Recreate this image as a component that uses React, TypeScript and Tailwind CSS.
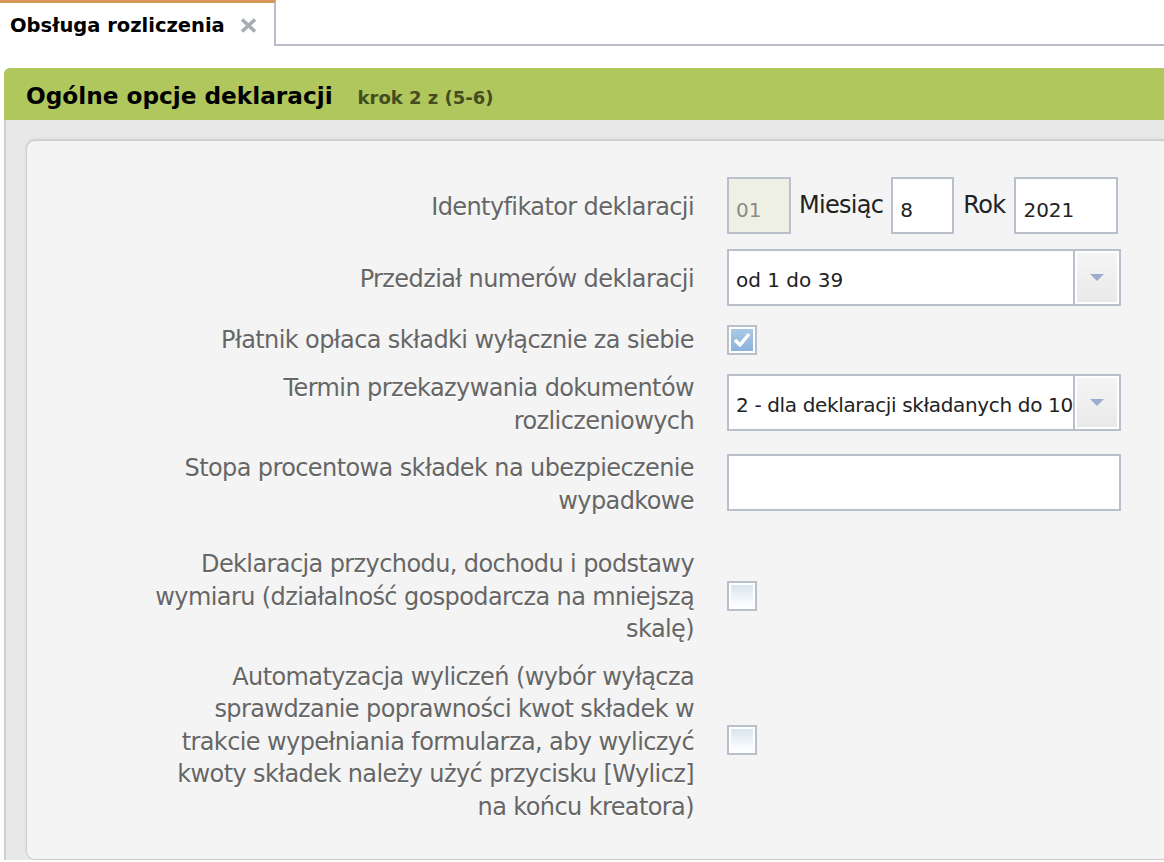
import React from "react";

const font = "font-['DejaVu_Sans',sans-serif]";

function Label({ lines }: { lines: string[] }) {
  return (
    <div className="-mb-[2px] w-[667px] shrink-0 pt-[2px] text-right text-[24px] leading-[32.5px] tracking-[-0.6px] text-[#666] [text-shadow:0_1px_0_#fff]">
      {lines.map((l, i) => (
        <div key={i}>{l}</div>
      ))}
    </div>
  );
}

function TextBox({
  value,
  className,
  muted,
}: {
  value: string;
  className: string;
  muted?: boolean;
}) {
  return (
    <div
      className={`flex h-[57px] items-center border-2 border-[#b9c0cc] pl-[7px] pt-[8px] text-[20px] ${
        muted ? "bg-[#eff0e4] text-[#8a8a8a]" : "bg-white text-[#222]"
      } ${className}`}
    >
      {value}
    </div>
  );
}

function Select({ value, tight }: { value: string; tight?: boolean }) {
  return (
    <div className="flex h-[57px] w-[394px] border-2 border-[#b9c0cc] bg-white">
      <div
        className={`flex flex-1 items-center overflow-hidden whitespace-nowrap pl-[7px] pt-[4px] text-[20px] text-[#222] ${
          tight ? "tracking-[-0.35px]" : ""
        }`}
      >
        {value}
      </div>
      <div className="flex w-[46px] shrink-0 items-center justify-center border-l-2 border-[#b9c0cc] bg-white p-[2px]">
        <div className="flex h-full w-full items-center justify-center bg-gradient-to-b from-[#f5f5f5] to-[#e9e9ea]">
          <svg width="14" height="8" viewBox="0 0 14 8">
            <path d="M0 0 L14 0 L7 7 Z" fill="#9dabcf" />
          </svg>
        </div>
      </div>
    </div>
  );
}

function Checkbox({ checked }: { checked?: boolean }) {
  return (
    <div className="h-[30px] w-[30px] border-2 border-[#b9c0cc] bg-white p-[2px]">
      {checked ? (
        <div className="flex h-full w-full items-center justify-center bg-gradient-to-b from-[#a9c8e5] to-[#8ab3da]">
          <svg width="18" height="16" viewBox="0 0 18 16">
            <path
              d="M2 8 L7 13 L16 2"
              fill="none"
              stroke="#fff"
              strokeWidth="3.5"
              strokeLinejoin="round"
            />
          </svg>
        </div>
      ) : (
        <div className="h-full w-full bg-gradient-to-b from-[#d9e5ef] to-white" />
      )}
    </div>
  );
}

function Row({
  lines,
  children,
  className = "",
}: {
  lines: string[];
  children: React.ReactNode;
  className?: string;
}) {
  return (
    <div className={`flex items-center ${className}`}>
      <Label lines={lines} />
      <div className="ml-[33px] flex items-center">{children}</div>
    </div>
  );
}

export default function App() {
  return (
    <div className={`h-[862px] w-[1164px] overflow-hidden bg-white ${font}`}>
      {/* tabs */}
      <div className="flex h-[46px]">
        <div className="flex w-[276px] shrink-0 items-center border-t-[3px] border-r-2 border-t-[#d8955a] border-r-[#b9bdc8] pl-[10px] pt-[2px]">
          <span className="text-[19.5px] font-bold text-black">
            Obsługa rozliczenia
          </span>
          <svg className="ml-[15px]" width="17" height="15" viewBox="0 0 17 15">
            <path
              d="M2 1.5 L15 13.5 M15 1.5 L2 13.5"
              stroke="#a7acb2"
              strokeWidth="3.6"
            />
          </svg>
        </div>
        <div className="flex-1 border-b-2 border-[#b9bdc8]" />
      </div>

      {/* panel */}
      <div className="ml-[4px] mt-[22px] rounded-tl-[6px] border-l-2 border-[#cfcfcf] bg-[#e8e8e8]">
        <div className="-ml-[2px] flex h-[52px] items-center rounded-tl-[6px] bg-[#b0c75d] pl-[22px] pt-[4px]">
          <span className="text-[23.2px] font-bold text-black">
            Ogólne opcje deklaracji
          </span>
          <span className="ml-[25px] pt-[2px] text-[18px] font-bold text-[#434d1f]">
            krok 2 z (5-6)
          </span>
        </div>

        <div className="pt-[20px]">
          <div className="ml-[20px] h-[720px] rounded-l-[9px] border border-r-0 border-[#cdcdcd] bg-[#f4f4f4] pt-[36px] shadow-[0_-1px_2px_rgba(0,0,0,0.12)]">
            <div className="flex flex-col gap-[15px]">
              <Row lines={["Identyfikator deklaracji"]}>
                <TextBox value="01" muted className="w-[64px]" />
                <span className="ml-[8px] mr-[8px] -mt-[1px] text-[24px] tracking-[-0.7px] text-[#222]">
                  Miesiąc
                </span>
                <TextBox value="8" className="w-[63px]" />
                <span className="ml-[9px] mr-[9px] -mt-[1px] text-[24px] tracking-[-0.7px] text-[#222]">
                  Rok
                </span>
                <TextBox value="2021" className="w-[104px]" />
              </Row>

              <Row lines={["Przedział numerów deklaracji"]}>
                <Select value="od 1 do 39" />
              </Row>

              <Row lines={["Płatnik opłaca składki wyłącznie za siebie"]}>
                <div className="pt-[4px]">
                  <Checkbox checked />
                </div>
              </Row>

              <Row lines={["Termin przekazywania dokumentów", "rozliczeniowych"]}>
                <Select value="2 - dla deklaracji składanych do 10" tight />
              </Row>

              <Row
                lines={["Stopa procentowa składek na ubezpieczenie", "wypadkowe"]}
              >
                <div className="h-[57px] w-[394px] border-2 border-[#b9c0cc] bg-white" />
              </Row>

              <Row
                className="mt-[16px]"
                lines={[
                  "Deklaracja przychodu, dochodu i podstawy",
                  "wymiaru (działalność gospodarcza na mniejszą",
                  "skalę)",
                ]}
              >
                <div className="pt-[3px]">
                  <Checkbox />
                </div>
              </Row>

              <Row
                lines={[
                  "Automatyzacja wyliczeń (wybór wyłącza",
                  "sprawdzanie poprawności kwot składek w",
                  "trakcie wypełniania formularza, aby wyliczyć",
                  "kwoty składek należy użyć przycisku [Wylicz]",
                  "na końcu kreatora)",
                ]}
              >
                <Checkbox />
              </Row>
            </div>
          </div>
        </div>
      </div>
    </div>
  );
}
